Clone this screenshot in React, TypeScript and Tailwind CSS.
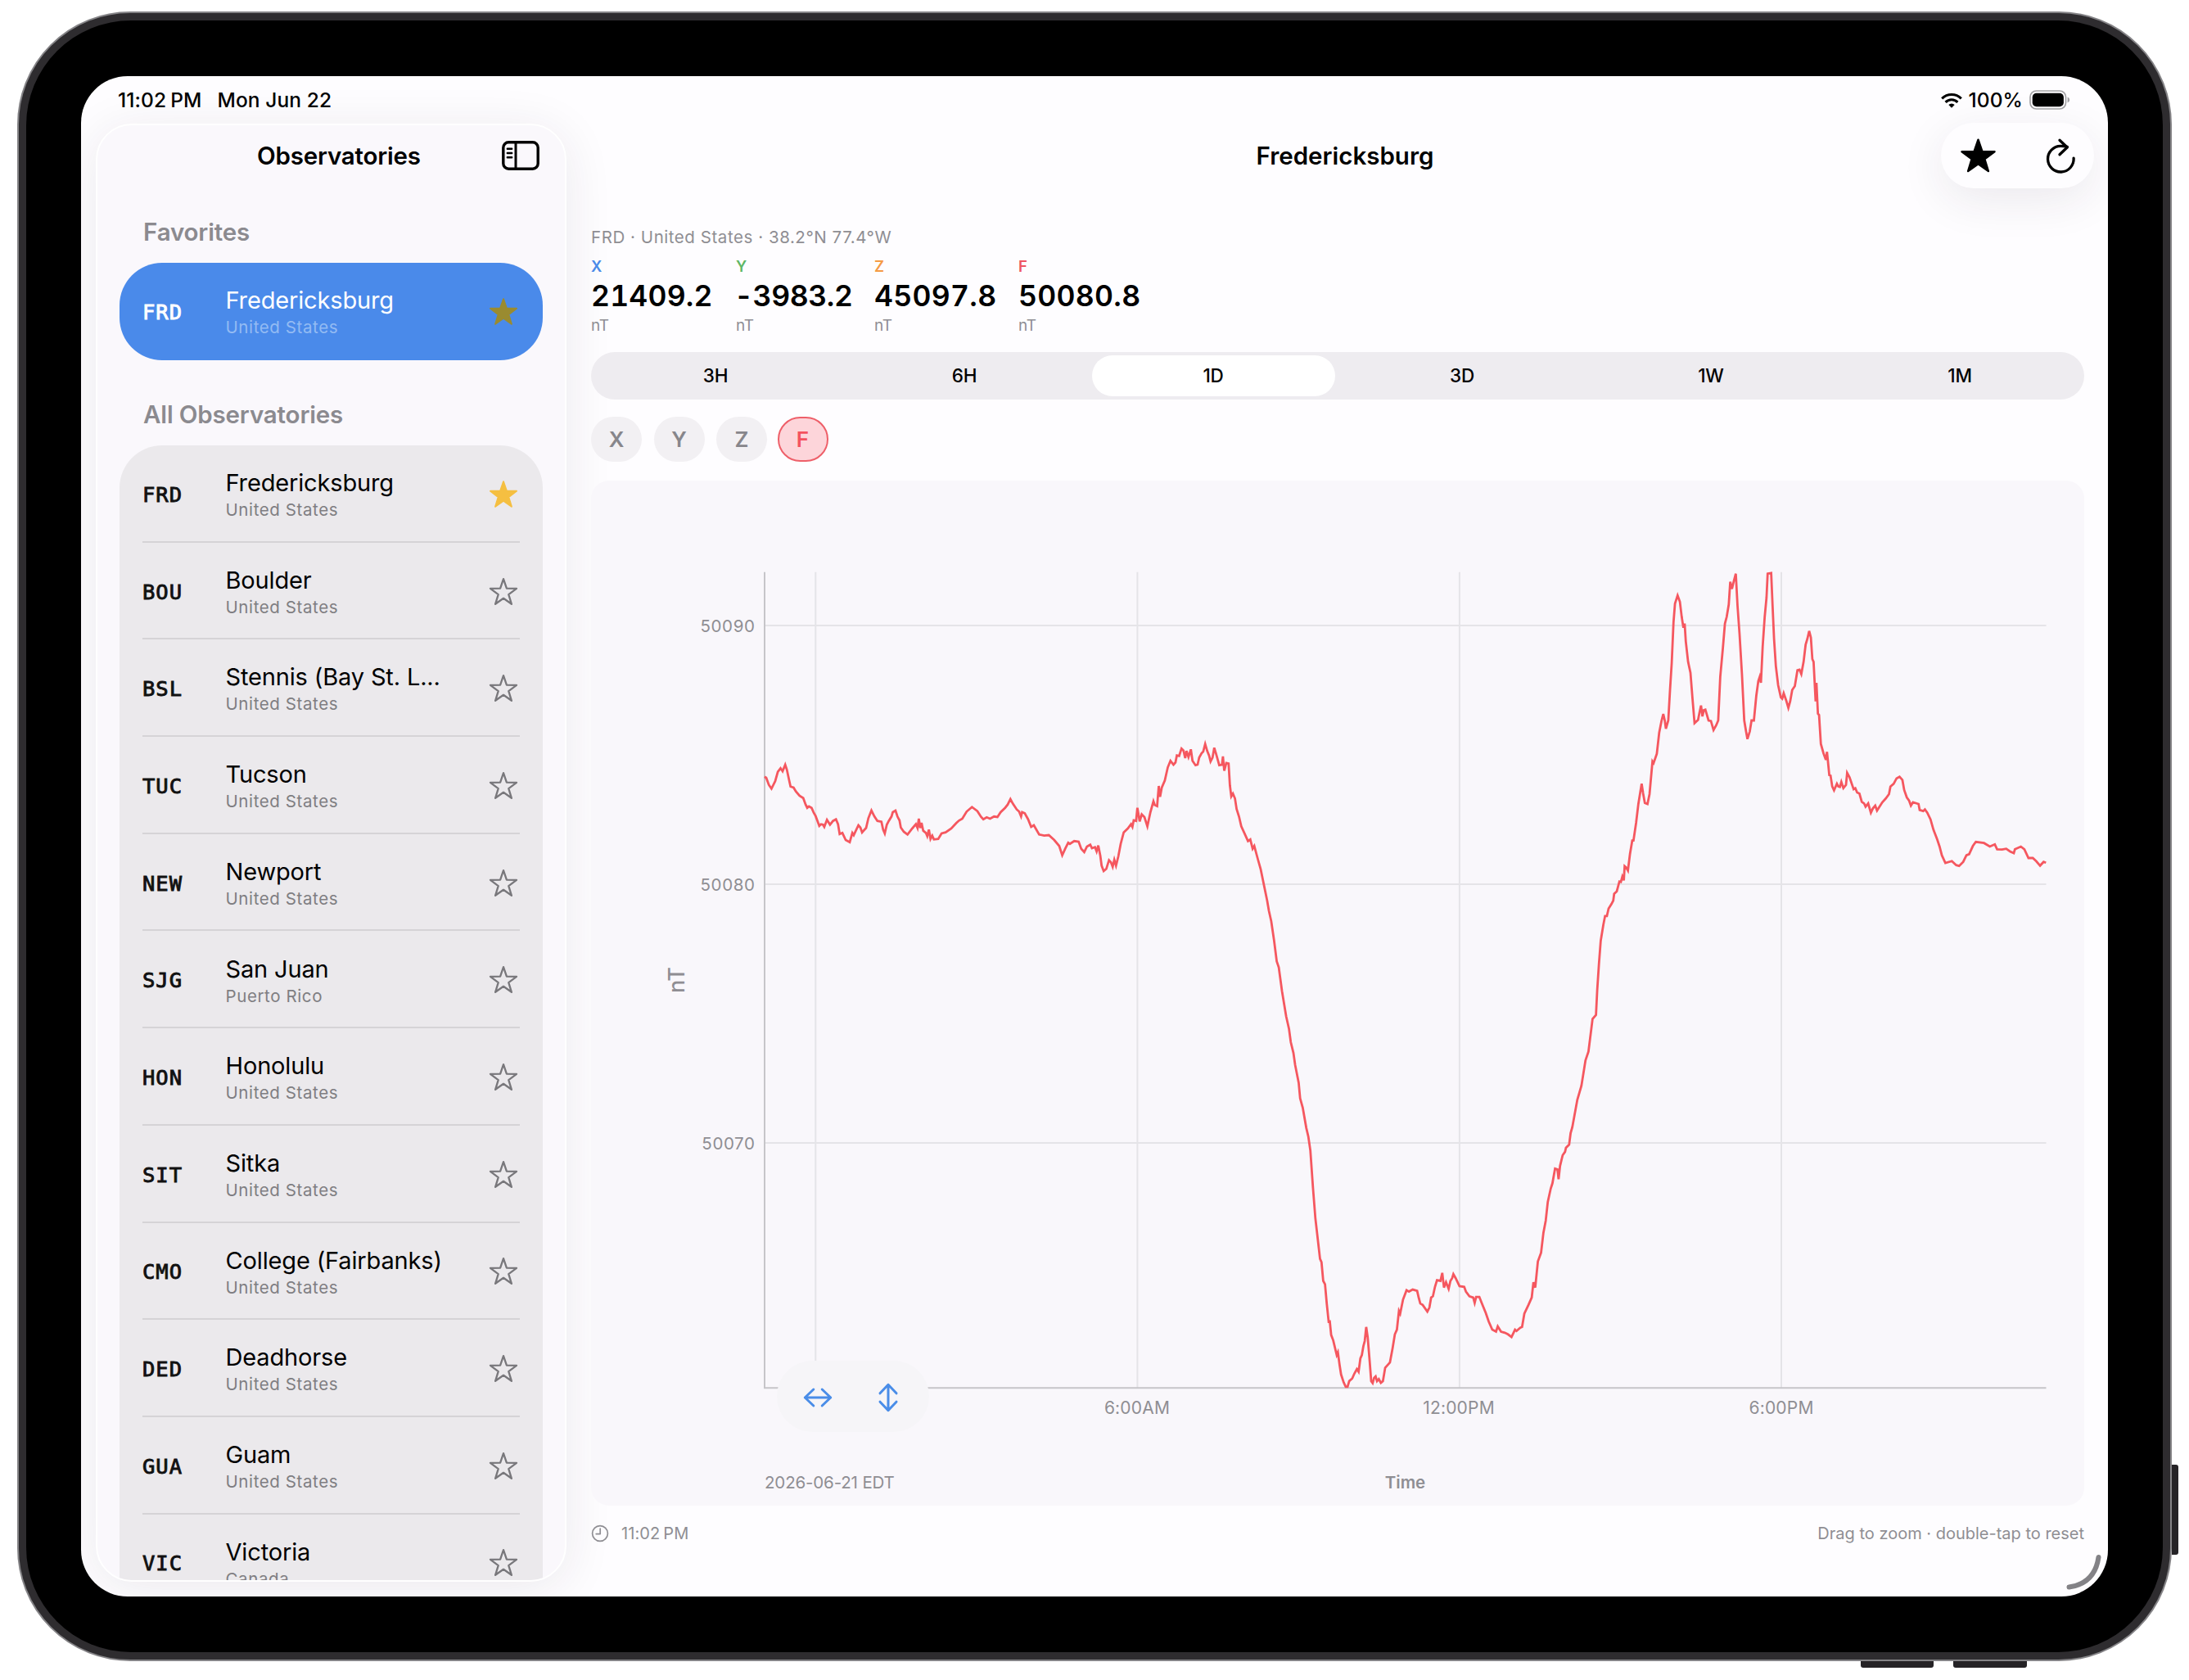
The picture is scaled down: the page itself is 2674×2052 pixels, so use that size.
import clsx from 'clsx'

// ─────────────────────────────────────────────────────────────────────────────
// App.tsx
//
// Observatory browser on a landscape tablet: sidebar list on the left,
// magnetometer readings and chart on the right.
// ─────────────────────────────────────────────────────────────────────────────

interface Observatory {
  code: string
  name: string
  country: string
  favorite?: boolean
}

const OBSERVATORIES: Observatory[] = [
  { code: 'FRD', name: 'Fredericksburg', country: 'United States', favorite: true },
  { code: 'BOU', name: 'Boulder', country: 'United States' },
  { code: 'BSL', name: 'Stennis (Bay St. L...', country: 'United States' },
  { code: 'TUC', name: 'Tucson', country: 'United States' },
  { code: 'NEW', name: 'Newport', country: 'United States' },
  { code: 'SJG', name: 'San Juan', country: 'Puerto Rico' },
  { code: 'HON', name: 'Honolulu', country: 'United States' },
  { code: 'SIT', name: 'Sitka', country: 'United States' },
  { code: 'CMO', name: 'College (Fairbanks)', country: 'United States' },
  { code: 'DED', name: 'Deadhorse', country: 'United States' },
  { code: 'GUA', name: 'Guam', country: 'United States' },
  { code: 'VIC', name: 'Victoria', country: 'Canada' },
]

const STATS = [
  { label: 'X', value: '21409.2', color: 'text-[#4a8ae8]', width: 'w-[177px]', spacing: 'tracking-[0.2px]' },
  { label: 'Y', value: '-3983.2', color: 'text-[#5fb765]', width: 'w-[169px]', spacing: '-ml-[2px] tracking-[-0.4px]' },
  { label: 'Z', value: '45097.8', color: 'text-[#f59b45]', width: 'w-[176px]', spacing: 'tracking-[0.3px]' },
  { label: 'F', value: '50080.8', color: 'text-[#ee5561]', width: 'w-[170px]', spacing: 'tracking-[0.3px]' },
]

const RANGES = ['3H', '6H', '1D', '3D', '1W', '1M']
const COMPONENTS = ['X', 'Y', 'Z', 'F']

const F_TRACE = `
933.9,948.7 936,950 939.2,958.7 942.4,963.3 947,954 950.2,942.7 953.5,938.3 956,942 959.2,934 961.2,940
963.7,951.7 965.7,960.7 969.4,962 972.2,966.7 976.7,972 981.2,974.7 984.1,982.7 986.1,986.7 988.2,985 991.4,986.7
993.9,992.3 996.3,996.7 998.4,1002.3 1000.8,1008.7 1002.9,1006.7 1005.3,1007.3 1006.9,1010 1010.2,1001.3 1013.9,1007.3 1017.6,1002.7
1021.2,1000.7 1023.7,1006.7 1025.7,1018.7 1029,1017.3 1033.1,1026 1038,1028.7 1041.2,1017.3 1042.9,1020 1048.6,1008 1051,1010.7
1053.1,1016.7 1058,1011.3 1060.8,999.3 1064.5,990 1068.2,997.3 1071.8,1002.7 1076.7,1003.7 1078.8,1013.3 1080.8,1018 1083.3,1007.3
1085.7,1002.7 1089,997.3 1090.6,992 1093.9,990 1096.3,997.3 1098.8,1002 1100.4,1010.7 1104.1,1016 1108.6,1019.3 1114.3,1012
1118.8,1006.7 1120.8,1011.3 1122.4,1000 1124.1,1011.3 1125.7,1005 1127.8,1014.7 1131,1017.3 1132.7,1021.3 1134.7,1013.3 1136.7,1024.7
1138.8,1020.7 1140.8,1025.3 1146.1,1024.7 1150.2,1018 1155.1,1016.7 1162,1012 1168.2,1005.3 1171.4,1002.3 1175.5,1000 1180.8,991.3
1187.3,985.7 1193.9,990.7 1198.4,997.7 1201.2,1000.7 1205.3,998.3 1209.4,1000 1214.3,997.3 1218.4,998 1222.4,992 1227.8,986.7
1231,982.7 1234.3,976 1237.1,981.3 1242,988.7 1244.9,991.3 1247.3,997.3 1248.6,992 1251.8,993.3 1255.9,1000.7 1259.6,1010
1262.9,1008 1269.4,1019.3 1275.5,1020.7 1281.2,1020 1287.8,1026 1293.9,1033.3 1297.6,1044.7 1301.2,1036.7 1304.9,1029.3 1306.9,1030.7
1312.2,1027.3 1317.6,1028 1320.8,1036.7 1324.5,1040.7 1327.8,1034 1331.8,1031.7 1333.9,1036 1337.6,1034.7 1339.6,1040 1341.6,1032.7
1344.1,1045.3 1345.7,1057.3 1348.2,1064 1351.4,1061.3 1354.7,1050.7 1357.1,1053.3 1359.2,1058.7 1361.2,1050 1363.3,1057.3 1366.1,1046
1369,1030.7 1372.7,1016.7 1377.6,1012 1381.6,1006.7 1383.3,1010 1384.9,1002 1387.8,1002.7 1389.4,986.7 1392.2,1003.3 1394.7,994.7
1398,998 1401.6,1009.3 1405.3,992 1409,978.7 1410.6,983.3 1413.5,984.7 1415.5,960 1417.1,973.3 1419.2,962 1422.9,953.3
1426.5,937.3 1429.8,929.3 1433.5,934 1435.9,931.3 1437.6,922.7 1440.4,923.3 1443.3,914.3 1445.7,916.7 1447.8,926 1449.4,917.3
1451.8,924.7 1454.7,915.3 1456.7,929.3 1460.4,934.7 1462.9,934 1464.9,925.3 1467.8,920 1469.8,918 1472.2,908.7 1474.7,917.3
1477.1,923.3 1478.8,930 1481.2,925.3 1483.3,913.3 1485.7,921.3 1489.4,934.7 1492.7,934 1493.9,924 1495.5,941.3 1498,932
1500.8,932.7 1502.4,959.3 1504.1,972.7 1506.1,969.3 1508.6,975.3 1510.6,988.3 1513.5,997.3 1516.3,1009.3 1520,1017.3 1524.5,1027.3
1527.3,1025.3 1530.2,1036.7 1532.2,1033.3 1536.7,1050 1540,1061.7 1547.9,1100 1550,1112.2 1552.9,1125.3 1556.4,1149 1559.6,1174.3
1562.1,1181.6 1566.1,1211 1571.1,1241.2 1574.6,1256.7 1576.8,1273 1580,1286.1 1582.1,1300.8 1586.4,1322.4 1588.2,1341.6 1591.4,1353
1595.7,1377.6 1598.2,1388.2 1600.7,1405.3 1603.9,1451 1606.8,1487.8 1612.5,1537.6 1614.3,1541.6 1616.4,1564.5 1618.6,1568.6 1620.7,1592.2
1623.2,1615.9 1624.3,1612.7 1626.1,1630.6 1628.6,1637.1 1632.9,1655.1 1634.3,1651.8 1636.4,1667.3 1638.2,1678.8 1641.4,1688.6 1643.9,1693.9
1646.1,1693.9 1648.2,1686.9 1651.8,1683.7 1654.3,1678 1657.5,1672.2 1659.6,1675.5 1661.8,1659.2 1663.6,1655.1 1665.4,1644.5 1667.1,1638
1668.9,1620.8 1670.7,1633.1 1673.2,1663.3 1675,1686.9 1676.8,1689.4 1678.6,1682.9 1680.4,1681.2 1682.1,1686.9 1684.3,1684.5 1686.8,1689
1689.3,1686.9 1692.1,1670.6 1697.9,1664.1 1701.1,1646.9 1703.9,1629.8 1706.4,1624.1 1708.9,1601.2 1710.4,1604.5 1713.9,1587.3 1718.2,1575.9
1721.1,1577.6 1725.7,1575.1 1731.1,1576.7 1733.2,1585.7 1735,1592.2 1737.9,1593.9 1743.6,1602 1746.1,1597.1 1748.2,1584.9 1750.4,1583.3
1752.9,1571.8 1755.4,1563.7 1759.6,1564.5 1761.8,1554.7 1763.9,1572.7 1766.4,1566.1 1769.6,1574.3 1771.8,1564.5 1773.9,1561.2 1775.4,1556.3
1778.2,1561.2 1782.9,1571 1788.6,1571.8 1790.7,1577.6 1795,1583.3 1799.6,1584.9 1801.4,1591.4 1803.2,1584.1 1807.1,1584.1 1810,1591.4
1815,1603.7 1818.6,1614.3 1822.9,1624.1 1827.5,1626.5 1829.6,1620 1833.6,1626.5 1838.2,1627.8 1842.1,1629.8 1846.4,1633.1 1850.7,1624.1
1852.5,1625.7 1857.1,1621.6 1859.3,1620.8 1862.1,1604.5 1867.1,1593.9 1871.1,1584.9 1873.2,1566.1 1875.4,1572.7 1878.6,1540.8 1882.5,1530.2
1885.4,1505.7 1888.2,1491 1890.7,1468.2 1894.3,1451.8 1896.4,1445.3 1899.6,1427.3 1902.5,1428.2 1903.9,1440.4 1905.7,1424.1 1908.9,1411
1911.8,1406.9 1912.9,1402 1916.8,1398 1918.6,1384.1 1920.7,1376.7 1926.8,1343.3 1931.8,1326.1 1936.8,1295.1 1940.4,1284.5 1945.4,1244.5
1949.6,1239.6 1951.1,1209.4 1953.2,1177.6 1955.4,1149 1958.6,1129.4 1960.7,1118.8 1962.9,1118.8 1965,1109.8 1968.6,1104.1 1970.7,1100
1971.8,1091.7 1975,1088.7 1978.2,1076.7 1980,1077.3 1981.8,1070.7 1983.6,1075.3 1984.6,1058 1986.8,1060 1988.6,1063.3 1991.1,1043.3
1993.9,1026.7 1995.4,1026.7 1998.6,1005 2001.4,981.7 2003.6,968.3 2005.4,957.3 2007.1,968.7 2009.3,980.7 2012.5,982 2015,970
2017.1,946.7 2018.6,930 2020,932 2023.9,920.7 2026.8,895 2029.6,880.7 2031.8,872 2033.6,880 2035,890 2037.9,880
2040,843.3 2042.1,810 2044.3,760 2046.1,737.3 2049.3,727.3 2052.1,735 2054.3,753.3 2056.4,766.7 2057.9,761.7 2059.3,783.3
2062.1,808.3 2065,821.7 2067.5,853.3 2070,883.3 2074.3,879.3 2076.1,870 2077.9,861.7 2079.6,875 2081.4,867.3 2083.2,866.7
2087.1,880 2090,880.7 2093.2,891.7 2096.4,886 2098.9,880 2101.4,826.7 2104.6,791.7 2107.1,761.7 2109.3,753.3 2111.8,738.3
2113.6,710.7 2115.7,719.3 2117.9,710 2120.4,700.7 2122.5,740 2125,775 2127.9,823.3 2130.7,880 2132.9,893.3 2134.6,902.7
2137.5,893.3 2139.6,880 2142.5,880 2145.4,850 2147.9,831.7 2149.6,826.7 2151.1,834 2153.2,790 2155.7,753.3 2157.9,730
2159.3,700.7 2163.6,700 2165.4,741.7 2167.1,780 2169.3,813.3 2172.1,836.7 2175.4,851.7 2177.1,853.3 2178.9,846.7 2182.1,856
2184.6,864.7 2186.8,856.7 2189.3,842.7 2192.5,838 2195.7,818.7 2198.2,818 2200.4,823.3 2203.2,808.3 2205.7,787.3 2207.9,780
2210,770.7 2212.1,778.7 2213.9,805 2215.4,808.3 2217.9,856.7 2218.9,834 2220.7,871.7 2222.1,873.3 2224.3,908.7 2227.5,920
2230.4,928 2231.8,918.3 2234.6,946.7 2236.1,947.3 2238.2,960.7 2240.4,965.3 2243.9,957.3 2245.7,960.7 2247.5,961.3 2249.3,955
2251.8,962.7 2255,958.7 2256.4,944 2259.3,949.3 2264.3,964 2266.4,962.7 2268.6,968 2271.4,969.3 2274.3,979.3 2277.1,981.3
2278.9,985.3 2282.1,981.3 2285.4,992.7 2287.9,987.3 2290.7,984 2292.9,990 2299.3,980 2303.6,975.3 2307.5,970 2309.3,960.7
2313.2,957.3 2316.8,950.7 2320.4,948.7 2323.9,952.7 2326.1,965 2329.3,974 2332.1,978 2334.3,984 2336.8,980 2343.6,982
2345,989.3 2349.3,990.7 2351.4,988.7 2354.3,992.7 2358.2,1000.7 2361.8,1013.3 2366.4,1025.3 2369.3,1034 2372.1,1044.7 2376.4,1054
2384.3,1051.7 2389.6,1056.7 2393.2,1057.7 2398.2,1052.7 2402.1,1044.7 2405.4,1043.3 2410,1033.3 2413.6,1028.3 2423.6,1029.7 2430.7,1034
2436.8,1031.3 2439.6,1037.3 2445.7,1037.7 2450.7,1036.7 2455.4,1040 2460,1042 2461.4,1037.3 2468.6,1034 2472.9,1037.3 2477.9,1048
2483.2,1048 2487.5,1052 2492.1,1057.3 2496.4,1052.7 2499.3,1053.7
`

// ── Icons ────────────────────────────────────────────────────────────────────

const STAR_PATH =
  'M18 2.2 L21.9 13.6 L34 13.8 L24.3 21.1 L27.9 32.8 L18 25.8 L8.1 32.8 L11.7 21.1 L2 13.8 L14.1 13.6 Z'

function Star({ className, filled }: { className?: string; filled?: boolean }) {
  return (
    <svg viewBox="0 0 36 36" className={className} overflow="visible">
      <path
        d={STAR_PATH}
        fill={filled ? 'currentColor' : 'none'}
        stroke="currentColor"
        strokeWidth={filled ? 2 : 2.3}
        strokeLinejoin="round"
      />
    </svg>
  )
}

function SidebarIcon() {
  return (
    <svg viewBox="0 0 46 36" className="h-9 w-[46px]" fill="none" stroke="#000">
      <rect x="1.8" y="1.8" width="42.4" height="32.4" rx="6.5" strokeWidth="3.4" />
      <path d="M17 2v32" strokeWidth="3" />
      <path d="M6.8 9.7h5.4M6.8 15h5.4M6.8 20.3h5.4" strokeWidth="2.4" strokeLinecap="round" />
    </svg>
  )
}

function RefreshIcon() {
  return (
    <svg
      viewBox="0 0 36 44"
      className="h-11 w-9"
      fill="none"
      stroke="#000"
      strokeWidth="3.3"
      strokeLinecap="round"
      strokeLinejoin="round"
    >
      <path d="M34.1 25.2A15.8 15.8 0 1 1 18.3 10.4q4 0 8 1" />
      <path d="M17 3.2l9.2 8.8-9.2 8.8" />
    </svg>
  )
}

function WifiIcon() {
  return (
    <svg viewBox="0 0 26 19" className="h-[19px] w-[26px]" fill="none" stroke="#000" strokeWidth="3.1">
      <path d="M1.2 7.3a16.8 16.8 0 0 1 23.6 0" />
      <path d="M5.6 11.8a10.5 10.5 0 0 1 14.8 0" />
      <path d="M13 18.8l-3.7-3.9a5.3 5.3 0 0 1 7.4 0z" fill="#000" stroke="none" />
    </svg>
  )
}

function BatteryIcon() {
  return (
    <svg viewBox="0 0 50 24" className="h-6 w-[50px]">
      <rect x="1" y="1" width="43.5" height="22" rx="7.5" fill="none" stroke="#a3a2a5" strokeWidth="1.7" />
      <rect x="3.7" y="3.7" width="38.2" height="16.6" rx="5" fill="#000" />
      <path d="M46.6 8.6q2.6 1 2.6 3.4t-2.6 3.4z" fill="#a3a2a5" />
    </svg>
  )
}

function ClockIcon() {
  return (
    <svg viewBox="0 0 22 22" className="size-[22px]" fill="none" stroke="#8f8e93" strokeWidth="1.7">
      <circle cx="11" cy="11" r="9.4" />
      <path d="M11.2 5.2v6.4H6.2" strokeLinecap="round" strokeLinejoin="round" />
    </svg>
  )
}

function ArrowsIcon({ className }: { className?: string }) {
  return (
    <svg
      viewBox="0 0 36 36"
      className={clsx('size-9', className)}
      fill="none"
      stroke="#4a8de8"
      strokeWidth="3"
      strokeLinecap="round"
      strokeLinejoin="round"
    >
      <path d="M2.3 18h31.4M12.8 8L2.3 18l10.5 10M23.2 8l10.5 10-10.5 10" />
    </svg>
  )
}

// ── Chrome ───────────────────────────────────────────────────────────────────

function StatusBar() {
  return (
    <div className="flex h-[58px] items-center pr-[46px] pl-[45px] text-[24.5px] font-medium tracking-[0.1px] text-black">
      <span>11:02</span>
      <span className="ml-[5px]">PM</span>
      <span className="ml-[19px]">Mon Jun 22</span>
      <span className="ml-auto flex items-center">
        <WifiIcon />
        <span className="mr-[8px] ml-[7px]">100%</span>
        <BatteryIcon />
      </span>
    </div>
  )
}

// ── Sidebar ──────────────────────────────────────────────────────────────────

function ObservatoryText({ item, selected }: { item: Observatory; selected?: boolean }) {
  return (
    <>
      <span
        className={clsx(
          "w-[101.5px] font-['DejaVu_Sans_Mono',monospace] text-[25.5px] leading-[30px] tracking-[1px] [-webkit-text-stroke:0.9px_currentColor]",
          selected ? 'text-white' : 'text-[#111]',
        )}
      >
        {item.code}
      </span>
      <span className="flex flex-1 flex-col">
        <span
          className={clsx(
            'text-[29px] leading-[39px] tracking-[-0.15px] whitespace-nowrap',
            selected ? 'text-white' : 'text-black',
          )}
        >
          {item.name}
        </span>
        <span
          className={clsx(
            'text-[20.5px] leading-[28.5px] tracking-[0.6px]',
            selected ? 'text-[#93bbf3]' : 'text-[#7f7e82]',
          )}
        >
          {item.country}
        </span>
      </span>
    </>
  )
}

function ObservatoryRow({ item }: { item: Observatory }) {
  return (
    <div className="mx-7 flex h-[118.7px] shrink-0 items-center border-b-2 border-[#d5d3d6] pt-[3px]">
      <ObservatoryText item={item} />
      <Star
        className={clsx('mr-[2px] size-9', item.favorite ? 'text-[#f5bf41]' : 'text-[#78777b]')}
        filled={item.favorite}
      />
    </div>
  )
}

function Sidebar() {
  return (
    <aside className="ml-[18px] flex h-[1781px] w-[575px] shrink-0 flex-col overflow-hidden rounded-[44px] border-2 border-white bg-[#faf8fc] shadow-[0_8px_60px_rgba(40,30,60,0.09)]">
      <div className="flex h-[76px] items-center pr-[31px] pb-[2px] pl-[195px]">
        <h2 className="flex-1 text-[29.5px] font-semibold tracking-[-0.2px] whitespace-nowrap text-black">
          Observatories
        </h2>
        <SidebarIcon />
      </div>
      <h3 className="mt-[34px] pl-[56px] text-[29.5px] leading-[40px] font-semibold tracking-[-0.15px] text-[#8b8a8f]">
        Favorites
      </h3>
      <div className="mx-[27px] mt-[18px] flex h-[119px] shrink-0 items-center rounded-[52px] bg-[#4a8aea] px-7">
        <ObservatoryText item={OBSERVATORIES[0]} selected />
        <Star className="mr-[2px] size-9 text-[#9a8b30]" filled />
      </div>
      <h3 className="mt-[46px] pl-[56px] text-[29.5px] leading-[40px] font-semibold tracking-[-0.15px] text-[#8b8a8f]">
        All Observatories
      </h3>
      <div className="mx-[27px] mt-[18px] flex min-h-0 flex-1 flex-col overflow-hidden rounded-t-[52px] bg-[#ebe9ec]">
        {OBSERVATORIES.map((item) => (
          <ObservatoryRow key={item.code} item={item} />
        ))}
      </div>
    </aside>
  )
}

// ── Detail ───────────────────────────────────────────────────────────────────

function DetailHeader() {
  return (
    <header className="-mt-px mr-[-12px] mb-px flex h-20 items-center pl-[193px]">
      <h1 className="flex-1 text-center text-[29.5px] font-semibold tracking-[0px] text-black">
        Fredericksburg
      </h1>
      <div className="flex h-20 w-[187px] items-center justify-between rounded-full bg-[#fefdff] pr-[23px] pl-[23px] shadow-[0_14px_56px_rgba(40,30,60,0.09)]">
        <Star className="size-[45px] text-black" filled />
        <RefreshIcon />
      </div>
    </header>
  )
}

function Stats() {
  return (
    <div className="mt-[11px] flex">
      {STATS.map((s) => (
        <div key={s.label} className={clsx('flex flex-col', s.width)}>
          <span className={clsx('text-[18.5px] leading-6 font-semibold', s.color)}>{s.label}</span>
          <span className={clsx('text-[35.5px] leading-[49px] font-semibold text-black tabular-nums', s.spacing)}>
            {s.value}
          </span>
          <span className="text-[19px] leading-6 tracking-[-0.3px] text-[#8f8e93]">nT</span>
        </div>
      ))}
    </div>
  )
}

function RangePicker({ active }: { active: string }) {
  return (
    <div className="mt-[20px] flex h-[58px] rounded-full bg-[#eeecf0] py-[4px]">
      {RANGES.map((r) => (
        <div
          key={r}
          className={clsx(
            'mx-[3.5px] flex flex-1 items-center justify-center rounded-full text-[22.5px] font-medium tracking-[-0.2px] text-black',
            r === active && 'bg-white',
          )}
        >
          {r}
        </div>
      ))}
    </div>
  )
}

function ComponentChips({ active }: { active: string }) {
  return (
    <div className="mt-[21px] flex gap-[14.5px]">
      {COMPONENTS.map((c) => (
        <div
          key={c}
          className={clsx(
            'flex h-[55px] w-[62px] items-center justify-center rounded-full text-[26px] font-semibold',
            c === active
              ? '-ml-[2px] border-2 border-[#ee5f69] bg-[#fdd5da] text-[#f4525e]'
              : 'bg-[#f2f0f3] text-[#87868b]',
          )}
        >
          {c}
        </div>
      ))}
    </div>
  )
}

function FieldChart() {
  return (
    <svg viewBox="722 587 1824 1252" className="h-full w-full font-['Inter',sans-serif]">
      <g stroke="#e5e4e8" strokeWidth="2">
        <path d="M996.3 698.7V1695M1389.4 698.7V1695M1782.9 698.7V1695M2176 698.7V1695" />
        <path d="M934 764H2499.5M934 1080H2499.5M934 1396H2499.5" />
      </g>
      <path d="M934 698.7V1695.2H2499.5" fill="none" stroke="#c6c5c9" strokeWidth="2" />
      <polyline points={F_TRACE} fill="none" stroke="#f5575f" strokeWidth="2.8" />
      <g fill="#8f8e93" fontSize="20.5">
        <g textAnchor="end" letterSpacing="0.6">
          <text x="922.5" y="771.5">50090</text>
          <text x="922.5" y="1087.5">50080</text>
          <text x="922.5" y="1403.5">50070</text>
        </g>
        <g textAnchor="middle" fontSize="21" letterSpacing="0.2">
          <text x="1389" y="1727">6:00AM</text>
          <text x="1782" y="1727">12:00PM</text>
          <text x="2176" y="1727">6:00PM</text>
        </g>
        <text x="934" y="1818" letterSpacing="-0.15">
          2026-06-21 EDT
        </text>
        <text x="1716.5" y="1818" textAnchor="middle" fontWeight="600">
          Time
        </text>
        <text transform="translate(836 1197) rotate(-90)" textAnchor="middle" fontSize="27" fontWeight="500">
          nT
        </text>
      </g>
    </svg>
  )
}

function ChartCard() {
  return (
    <section className="relative mt-[23px] h-[1252px] rounded-[22px] bg-[#f9f7fb]">
      <FieldChart />
      {/* zoom-axis toggles float over the plot corner */}
      <div className="absolute top-[1075px] left-[227px] flex h-[87px] w-[186px] items-center rounded-full bg-[#f6f5f8] pt-[2px] pl-[32px]">
        <ArrowsIcon />
        <ArrowsIcon className="ml-[50px] rotate-90" />
      </div>
    </section>
  )
}

function Footer() {
  return (
    <footer className="mt-[22px] flex h-6 items-center text-[20px] text-[#8f8e93]">
      <ClockIcon />
      <span className="ml-[15px] tracking-[0.1px]">11:02</span>
      <span className="ml-[4px] tracking-[0.2px]">PM</span>
      <span className="ml-auto tracking-[0px]">Drag to zoom · double-tap to reset</span>
    </footer>
  )
}

function Detail() {
  return (
    <main className="flex min-w-0 flex-1 flex-col pr-[29px] pl-[30px]">
      <DetailHeader />
      <p className="mt-[47px] text-[20.5px] leading-6 tracking-[0.55px] text-[#8f8e93]">
        FRD · United States · 38.2°N 77.4°W
      </p>
      <Stats />
      <RangePicker active="1D" />
      <ComponentChips active="F" />
      <ChartCard />
      <Footer />
    </main>
  )
}

// ── App ──────────────────────────────────────────────────────────────────────

export default function App() {
  return (
    <div className="h-[2052px] w-[2674px] overflow-hidden bg-white pt-[14px] pl-[21px] font-['Inter',sans-serif]">
      <div className="relative h-[2015px] w-[2632px] rounded-[138px] border-2 border-[#858487] bg-[#2e2c2f] p-[9px]">
        <div className="h-full w-full rounded-[128px] bg-black px-[67px] py-[68px]">
          <div className="relative h-full w-full overflow-hidden rounded-[57px] bg-[#fefdff]">
            <StatusBar />
            <div className="flex">
              <Sidebar />
              <Detail />
            </div>
            {/* window resize handle */}
            <svg viewBox="0 0 48 48" className="absolute right-[5px] bottom-[5px] size-12" fill="none">
              <path d="M41.5 5Q37 37 5.5 41.5" stroke="#838286" strokeWidth="6" strokeLinecap="round" />
            </svg>
          </div>
        </div>
        {/* hardware buttons */}
        <div className="absolute top-[1773px] right-[-10px] h-[110px] w-[8px] rounded-r-[3px] bg-[#252326]" />
        <div className="absolute bottom-[-10px] left-[2250px] h-[8px] w-[89px] rounded-b-[3px] bg-[#252326]" />
        <div className="absolute bottom-[-10px] left-[2363px] h-[8px] w-[90px] rounded-b-[3px] bg-[#252326]" />
      </div>
    </div>
  )
}
